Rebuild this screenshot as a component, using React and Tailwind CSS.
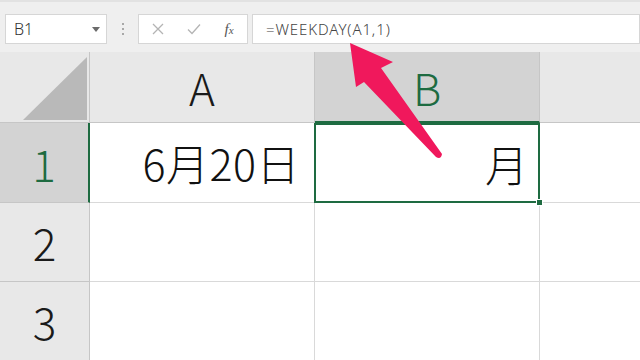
import React from "react";

const jp = { fontFamily: '"Noto Sans CJK JP", "Noto Sans", sans-serif' };

export default function App() {
  return (
    <div className="relative w-[640px] h-[360px] overflow-hidden bg-white" style={jp}>
      {/* toolbar */}
      <div className="h-[52px] bg-[#efefef] flex items-start pt-[12px] border-t-[2px] border-[#e2e2e2]">
        <div className="ml-[5px] w-[102px] h-[30px] bg-white border border-[#d6d6d6] flex items-center justify-between pl-[8px] pr-[6px]">
          <span className="text-[16px] font-light text-[#333] leading-none" style={{ fontFamily: '"Noto Sans", sans-serif' }}>B1</span>
          <svg width="8" height="5" viewBox="0 0 8 5"><path d="M0 0 L8 0 L4 5 Z" fill="#6b6b6b" /></svg>
        </div>
        <div className="w-[31px] h-[30px] flex flex-col items-center justify-center gap-[3px]">
          <div className="w-[2px] h-[2px] bg-[#a8a8a8]" />
          <div className="w-[2px] h-[2px] bg-[#a8a8a8]" />
          <div className="w-[2px] h-[2px] bg-[#a8a8a8]" />
        </div>
        <div className="w-[110px] h-[30px] bg-white border border-[#d6d6d6] flex items-center">
          <div className="w-[38px] flex justify-center">
            <svg width="12" height="12" viewBox="0 0 12 12"><path d="M1 1 L11 11 M11 1 L1 11" stroke="#b4b4b4" strokeWidth="1.3" /></svg>
          </div>
          <div className="w-[34px] flex justify-center">
            <svg width="14" height="12" viewBox="0 0 14 12"><path d="M1 6.5 L5 10.5 L13 1.5" stroke="#b4b4b4" strokeWidth="1.3" fill="none" /></svg>
          </div>
          <div className="w-[36px] flex justify-center">
            <span className="italic text-[15px] text-[#555] leading-none" style={{ fontFamily: '"Liberation Serif", serif' }}>f<span className="text-[11px]">x</span></span>
          </div>
        </div>
        <div className="ml-[4px] flex-1 h-[30px] bg-white border border-[#d6d6d6] flex items-center pl-[13px]">
          <span className="text-[15px] font-light tracking-[0.9px] text-[#444] leading-none" style={{ fontFamily: '"Noto Sans", sans-serif' }}>=WEEKDAY(A1,1)</span>
        </div>
      </div>

      {/* grid */}
      <div className="grid grid-cols-[90px_225px_225px_100px] grid-rows-[71px_80px_79px_78px]">
        {/* corner */}
        <div className="bg-[#e8e8e8] border-r border-b border-[#c6c6c6] relative">
          <svg className="absolute left-[23px] top-[5px]" width="64" height="63" viewBox="0 0 64 63"><path d="M0 63 L64 0 L64 63 Z" fill="#b9b9b9" /></svg>
        </div>
        <div className="bg-[#e8e8e8] border-r border-b border-[#c6c6c6] flex items-center justify-center">
          <span className="text-[44px] font-light leading-none text-[#1a1a1a]">A</span>
        </div>
        <div className="bg-[#d3d3d3] border-r border-[#c6c6c6] border-b-[2px] border-b-[#1e6b41] flex items-center justify-center">
          <span className="text-[44px] font-light leading-none text-[#1e6b41]">B</span>
        </div>
        <div className="bg-[#e8e8e8] border-b border-[#c6c6c6]" />

        {/* row 1 */}
        <div className="bg-[#d3d3d3] border-b border-[#c6c6c6] border-r-[2px] border-r-[#1e6b41] flex items-center justify-center">
          <span className="text-[44px] font-light leading-none text-[#1e6b41]">1</span>
        </div>
        <div className="border-r border-b border-[#d9d9d9] flex items-center justify-end pr-[14px]">
          <span className="text-[43px] font-light leading-none text-[#111] tracking-[0.5px]">6月20日</span>
        </div>
        <div className="relative border-[2px] border-[#1e6b41] flex items-center justify-end pr-[10px] -ml-px">
          <span className="text-[43px] font-light leading-none text-[#111]">月</span>
          <div className="absolute right-[-5px] bottom-[-5px] w-[7px] h-[7px] bg-[#1e6b41] border border-white" />
        </div>
        <div className="border-b border-[#d9d9d9]" />

        {/* row 2 */}
        <div className="bg-[#e8e8e8] border-r border-b border-[#c6c6c6] flex items-center justify-center">
          <span className="text-[44px] font-light leading-none text-[#1a1a1a]">2</span>
        </div>
        <div className="border-r border-b border-[#d9d9d9]" />
        <div className="border-r border-b border-[#d9d9d9]" />
        <div className="border-b border-[#d9d9d9]" />

        {/* row 3 */}
        <div className="bg-[#e8e8e8] border-r border-[#c6c6c6] flex items-center justify-center">
          <span className="text-[44px] font-light leading-none text-[#1a1a1a]">3</span>
        </div>
        <div className="border-r border-[#d9d9d9]" />
        <div className="border-r border-[#d9d9d9]" />
        <div />
      </div>

      {/* arrow */}
      <svg className="absolute left-0 top-0 pointer-events-none" width="640" height="360" viewBox="0 0 640 360">
        <path d="M350 43 L393 62 L381 68 L442 154 Q441 160 436 157 L364 82 L356 87 Z" fill="#f0185c" />
      </svg>
    </div>
  );
}
